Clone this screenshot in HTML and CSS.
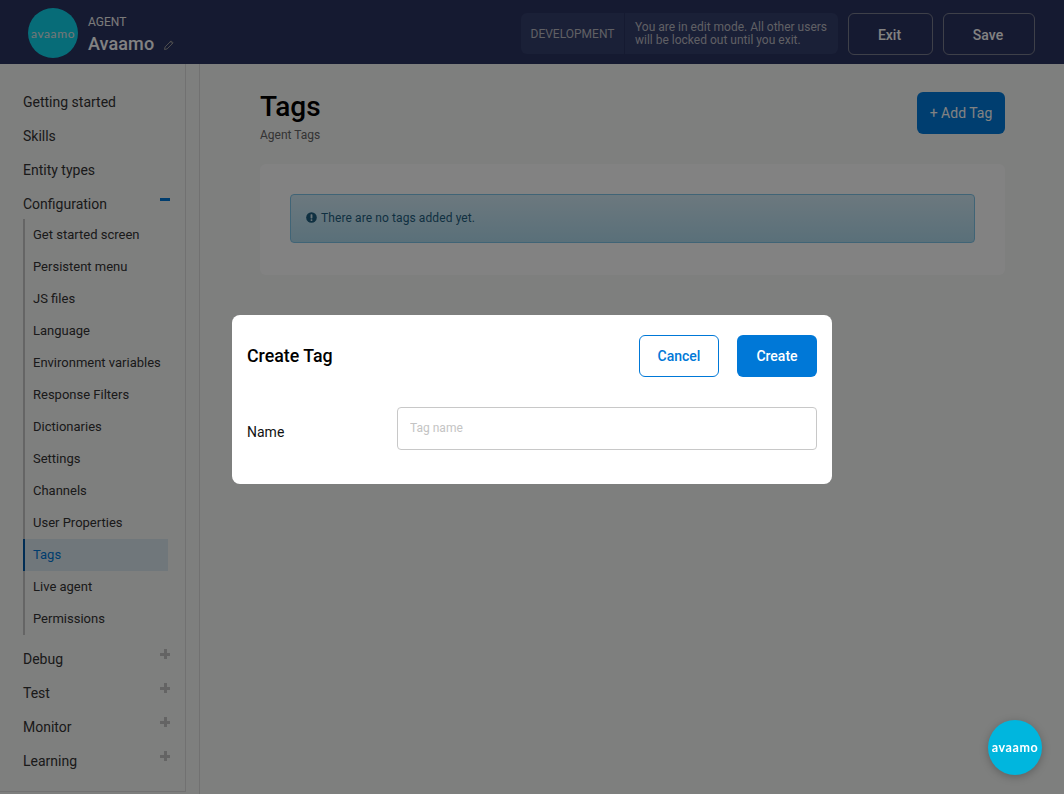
FILE: index.html
```html
<!DOCTYPE html>
<html lang="en">
<head>
<meta charset="utf-8">
<title>Tags</title>
<link rel="stylesheet" href="styles.css">
</head>
<body>
<div class="app">
  <header class="topbar">
    <div class="brand">
      <div class="logo"><span>avaamo</span></div>
      <div class="agent">
        <div class="agent-label">AGENT</div>
        <div class="agent-name">Avaamo
          <svg class="pencil" viewBox="0 0 12 12" width="12" height="12"><path d="M1.5 10.5l.6-2.6 6-6 2 2-6 6-2.6.6zM7.3 2.7l2 2" fill="none" stroke="currentColor" stroke-width="1"/></svg>
        </div>
      </div>
    </div>
    <div class="actions">
      <div class="status">
        <div class="env">DEVELOPMENT</div>
        <div class="status-msg">You are in edit mode. All other users will be locked out until you exit.</div>
      </div>
      <button class="ghost exit">Exit</button>
      <button class="ghost save">Save</button>
    </div>
  </header>
  <div class="body">
    <aside class="side">
      <nav class="nav">
        <a class="nav-item">Getting started</a>
        <a class="nav-item">Skills</a>
        <a class="nav-item">Entity types</a>
        <a class="nav-item">Configuration<i class="minus"></i></a>
        <div class="sub">
          <a class="sub-item">Get started screen</a>
          <a class="sub-item">Persistent menu</a>
          <a class="sub-item">JS files</a>
          <a class="sub-item">Language</a>
          <a class="sub-item">Environment variables</a>
          <a class="sub-item">Response Filters</a>
          <a class="sub-item">Dictionaries</a>
          <a class="sub-item">Settings</a>
          <a class="sub-item">Channels</a>
          <a class="sub-item">User Properties</a>
          <a class="sub-item active">Tags</a>
          <a class="sub-item">Live agent</a>
          <a class="sub-item">Permissions</a>
        </div>
        <a class="nav-item">Debug<i class="plus"></i></a>
        <a class="nav-item">Test<i class="plus"></i></a>
        <a class="nav-item">Monitor<i class="plus"></i></a>
        <a class="nav-item">Learning<i class="plus"></i></a>
      </nav>
    </aside>
    <main class="main">
      <div class="page-head">
        <div>
          <h1>Tags</h1>
          <p class="sub-title">Agent Tags</p>
        </div>
        <button class="add">+ Add Tag</button>
      </div>
      <section class="card">
        <div class="alert">
          <svg class="alert-icon" viewBox="0 0 12 12" width="11" height="11"><circle cx="6" cy="6" r="5.8" fill="currentColor"/><rect x="5" y="2.4" width="2" height="4.6" rx=".6" fill="#cfe6f0"/><rect x="5" y="7.9" width="2" height="1.8" rx=".6" fill="#cfe6f0"/></svg>
          There are no tags added yet.
        </div>
      </section>
    </main>
  </div>
</div>
<div class="overlay">
  <div class="modal">
    <div class="modal-head">
      <h2>Create Tag</h2>
      <div class="modal-actions">
        <button class="cancel">Cancel</button>
        <button class="create">Create</button>
      </div>
    </div>
    <div class="field">
      <label for="tag">Name</label>
      <input id="tag" type="text" placeholder="Tag name">
    </div>
  </div>
</div>
<div class="bubble"><span>avaamo</span></div>
</body>
</html>
```
FILE: styles.css
```css
* { box-sizing: border-box; }
html, body { margin: 0; height: 100%; }
body { font-family: Roboto, "Liberation Sans", sans-serif; color: #111; background: #f8f9f8; overflow: hidden; }
.app { height: 794px; display: flex; flex-direction: column; }
.topbar { height: 64px; flex: none; background: #2a3360; display: flex; justify-content: space-between; padding: 8px 29px 0 28px; }
.brand { display: flex; align-items: flex-start; gap: 10px; }
.logo { width: 50px; height: 50px; border-radius: 50%; background: #0fd4ec; color: #e8e8e8; display: flex; align-items: center; justify-content: center; font-family: Lato, Roboto, sans-serif; font-size: 12px; letter-spacing: .6px; }
.agent { padding-top: 7px; color: #fff; }
.agent-label { font-size: 12px; line-height: 14px; color: #f0f0f0; }
.agent-name { font-size: 18px; line-height: 22px; font-weight: 500; margin-top: 4px; letter-spacing: .1px; color: #fff; }
.pencil { color: #9a9a9a; margin-left: 4px; vertical-align: -1px; }
.actions { display: flex; align-items: flex-start; padding-top: 5px; }
.status { width: 317px; height: 41px; background: #343f6c; border-radius: 6px; display: flex; font-size: 12px; color: #bcbcc4; margin-right: 10px; }
.env { width: 104px; flex: none; display: flex; align-items: center; justify-content: center; border-right: 1px solid #2a3360; }
.status-msg { padding: 8px 8px 0 10px; line-height: 13px; }
.ghost { height: 42px; background: transparent; border: 1px solid #7b7f90; border-radius: 6px; color: #fff; font: 500 14px Roboto, sans-serif; padding: 1px 2px 0 0; }
.exit { width: 85px; margin-right: 10px; }
.save { width: 92px; }
.body { flex: 1; display: flex; min-height: 0; }
.side { width: 200px; flex: none; border-right: 1px solid #ddd; padding-bottom: 2px; }
.nav { width: 186px; height: 100%; border-right: 1px solid #ddd; border-bottom: 1px solid #ddd; padding: 21px 15px 0 23px; }
.nav-item { display: flex; justify-content: space-between; height: 34px; line-height: 34px; font-size: 14px; color: #333; }
.minus { width: 10px; height: 3px; background: #0078d7; margin-top: 11px; }
.plus { width: 10px; height: 10px; margin-top: 7px; background: linear-gradient(#c4c4c4,#c4c4c4) center/100% 3px no-repeat, linear-gradient(#c4c4c4,#c4c4c4) center/3px 100% no-repeat; }
.sub { margin: -2px 2px 7px 0; border-left: 2px solid #c6c6c6; }
.sub-item { display: block; height: 32px; line-height: 32px; font-size: 13px; padding-left: 8px; color: #333; }
.sub-item.active { background: #dbe9f2; color: #0078d7; border-left: 2px solid #0058a8; margin-left: -2px; }
.main { flex: 1; min-width: 0; padding: 28px 59px 0 60px; }
.page-head { display: flex; justify-content: space-between; align-items: flex-start; }
h1 { margin: 0; font-size: 28px; line-height: 30px; font-weight: 500; color: #000; }
.sub-title { margin: 6px 0 0; font-size: 12px; line-height: 14px; color: #666; }
.add { width: 88px; height: 42px; background: #007bdb; border: 0; border-radius: 6px; color: #fff; font: 14px Roboto, sans-serif; }
.card { margin-top: 22px; height: 111px; background: #fff; border-radius: 6px; padding: 30px; }
.alert { height: 49px; border: 1px solid #7fc4e8; border-radius: 4px; background: linear-gradient(#d4ecf8, #b0dbee); color: #1f5f80; font-size: 12px; letter-spacing: .1px; display: flex; align-items: center; padding: 0 0 2px 15px; gap: 4px; }
.overlay { position: fixed; inset: 0; background: rgba(0,0,0,.49); display: flex; align-items: center; justify-content: center; padding-top: 5px; }
.modal { width: 600px; height: 169px; background: #fff; border-radius: 8px; padding: 20px 15px 0; }
.modal-head { display: flex; justify-content: space-between; align-items: center; height: 42px; }
h2 { margin: 0 0 2px; font-size: 17.8px; font-weight: 500; color: #000; }
.modal-actions { display: flex; gap: 18px; }
.cancel, .create { width: 80px; height: 42px; border-radius: 6px; font: 500 14px Roboto, sans-serif; }
.cancel { background: #fff; color: #0078d7; border: 1px solid #0078d7; }
.create { background: #0078d7; color: #fff; border: 0; }
.field { display: flex; margin-top: 30px; }
label { width: 150px; flex: none; font-size: 14px; line-height: 50px; color: #111; }
input { flex: 1; height: 43px; border: 1px solid #c8c8c8; border-radius: 4px; padding: 0 12px 2px; font: 12px Roboto, sans-serif; outline: 0; }
input::placeholder { color: #c4c4c4; }
.bubble { position: fixed; left: 988px; top: 720px; width: 54px; height: 55px; border-radius: 50%; background: #00b6de; color: #fff; display: flex; align-items: center; justify-content: center; font-family: Lato, Roboto, sans-serif; font-weight: 700; font-size: 12.5px; letter-spacing: .6px; box-shadow: 0 2px 8px rgba(0,0,0,.25); }
```
